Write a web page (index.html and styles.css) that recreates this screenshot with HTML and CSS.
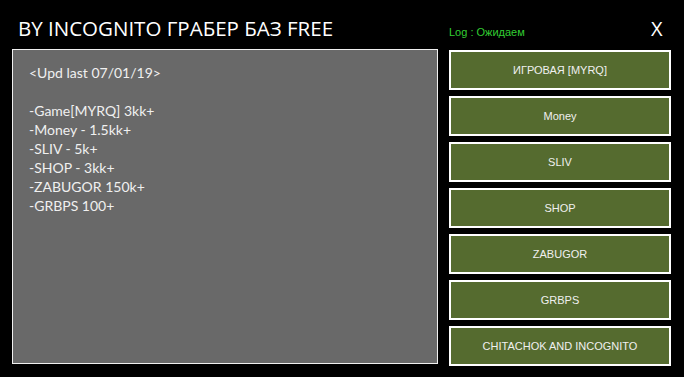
FILE: index.html
```html
<!DOCTYPE html>
<html>
  <head>
    <title>BY INCOGNITO ГРАБЕР БАЗ FREE</title>
    <link rel="stylesheet" href="styles.css">
  </head>
  <body>
    <div class="window">
      <div class="header">
        <h1 class="title">BY INCOGNITO ГРАБЕР БАЗ FREE</h1>
        <span class="log">Log : Ожидаем</span>
        <span class="close">X</span>
      </div>
      <div class="main">
        <div class="info">
          <p>&lt;Upd last 07/01/19&gt;</p>
          <p>&nbsp;</p>
          <p>-Game[MYRQ] 3kk+</p>
          <p>-Money - 1.5kk+</p>
          <p>-SLIV - 5k+</p>
          <p>-SHOP - 3kk+</p>
          <p>-ZABUGOR 150k+</p>
          <p>-GRBPS 100+</p>
        </div>
        <div class="buttons">
          <button class="base-button">ИГРОВАЯ [MYRQ]</button>
          <button class="base-button">Money</button>
          <button class="base-button">SLIV</button>
          <button class="base-button">SHOP</button>
          <button class="base-button">ZABUGOR</button>
          <button class="base-button">GRBPS</button>
          <button class="base-button">CHITACHOK AND INCOGNITO</button>
        </div>
      </div>
    </div>
  </body>
</html>
```

FILE: styles.css
```css
html,
body {
  margin: 0;
  background-color: #000;
}

.window {
  width: 684px;
  height: 377px;
  padding-left: 12px;
  box-sizing: border-box;
}

.header {
  display: flex;
  align-items: center;
  height: 49px;
  padding-top: 7px;
  box-sizing: border-box;
}

.title {
  width: 431px;
  margin: 0;
  padding-left: 6px;
  font-family: "Open Sans", sans-serif;
  font-size: 20.5px;
  font-weight: normal;
  color: #fff;
}

.log {
  flex: 1;
  padding-top: 7px;
  font-family: "Liberation Sans", sans-serif;
  font-size: 11px;
  color: #32cd32;
}

.close {
  width: 33px;
  font-family: "Open Sans", sans-serif;
  font-size: 20px;
  color: #fff;
}

.main {
  display: flex;
  gap: 11px;
}

.info {
  width: 426px;
  height: 315px;
  box-sizing: border-box;
  padding: 13px 16px;
  border: 1px solid #f0f0f0;
  background-color: #696969;
  color: #f0f0f0;
  font-family: Lato, sans-serif;
  font-size: 14px;
  line-height: 19px;
}

.info p {
  margin: 0;
}

.buttons {
  display: flex;
  flex-direction: column;
  gap: 6px;
  width: 222px;
  margin-top: 1px;
}

.base-button {
  height: 40px;
  border: 2px solid #fff;
  background-color: #556b2f;
  color: #f0f0f0;
  font-family: "Liberation Sans", sans-serif;
  font-size: 11px;
  cursor: pointer;
}
```
